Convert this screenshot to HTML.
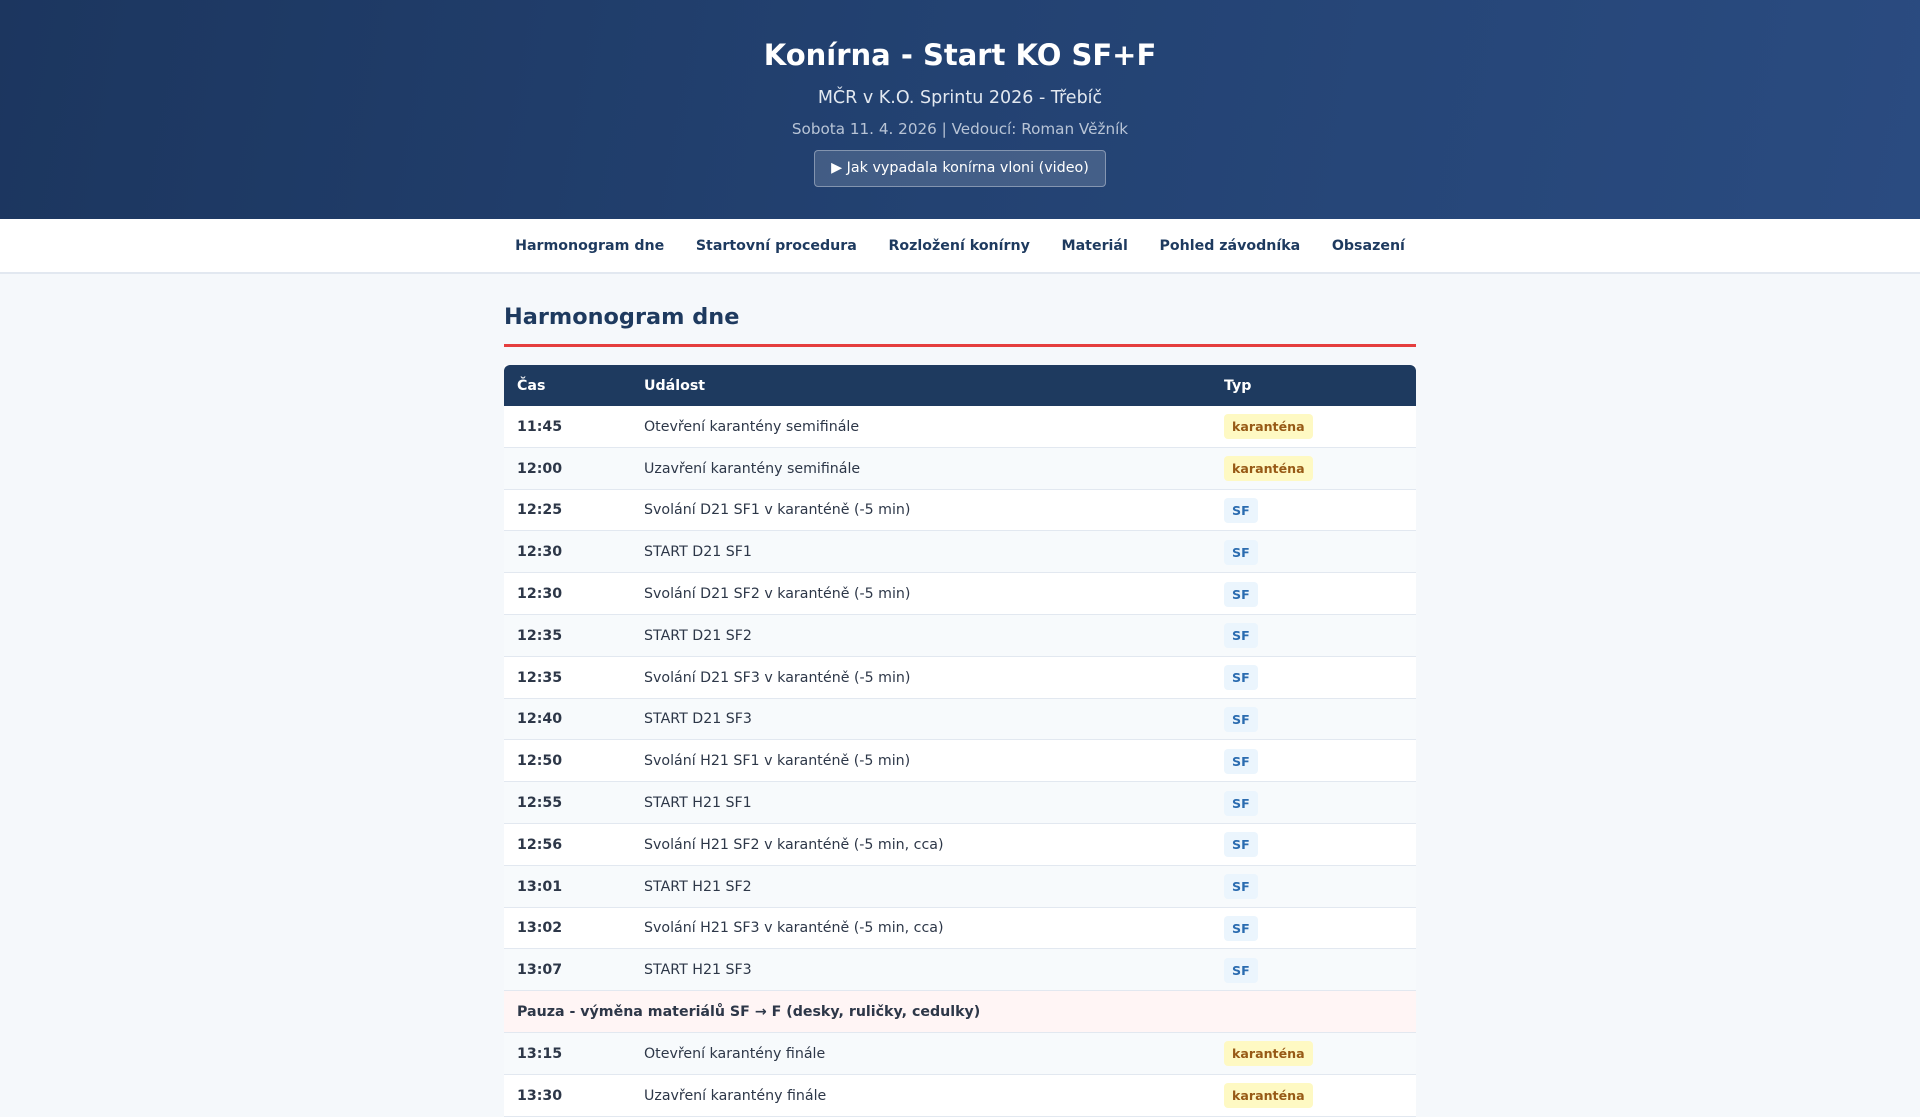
<!DOCTYPE html>
<html><head><meta charset="utf-8">
<style>
*{box-sizing:border-box;margin:0;padding:0}
body{width:1920px;height:1080px;overflow:hidden;background:#f5f8fb;font-family:"DejaVu Sans","Liberation Sans",sans-serif;color:#2d3748}
header{height:219px;background:linear-gradient(100deg,#1c365f 0%,#234272 50%,#2a4b80 100%);text-align:center;color:#fff;padding-top:36px}
h1{font-size:29px;font-weight:bold;line-height:38px}
.sub{font-size:17.5px;color:#e2e8f0;margin-top:13px;line-height:22px}
.date{font-size:15.2px;color:#b8c4d6;margin-top:10px;line-height:20px}
.btn{display:inline-block;margin-top:11px;height:37px;padding:0 16px;line-height:35px;border:1px solid rgba(255,255,255,.35);background:rgba(255,255,255,.15);border-radius:4px;font-size:14.3px;color:#fff}
nav{height:55px;background:#fff;border-bottom:2px solid #e2e8f0;display:flex;justify-content:center;align-items:center;gap:0}
nav a{font-size:14.2px;font-weight:bold;color:#1e3a5f;padding:0 15.8px;line-height:20px}
.wrap{width:912px;margin:0 auto}
h2{font-size:22.4px;color:#1e3a5f;margin-top:26px;line-height:34px;padding-bottom:10px;border-bottom:3px solid #e53e3e}
table{width:100%;border-collapse:separate;border-spacing:0;margin-top:18px;font-size:14.2px;background:#fff}
th{background:#1e3a5f;color:#fff;text-align:left;height:41px;padding:0 13px;font-size:14.2px}
th:first-child{border-top-left-radius:6px}th:last-child{border-top-right-radius:6px}
td{height:41.8px;padding:1px 13px 0;border-bottom:1px solid #e2e8f0}
tr:nth-child(odd) td{background:#f7fafc}
td:first-child{font-weight:bold;width:127px}
td:nth-child(2){width:580px}
.k,.s{display:inline-block;font-size:12.6px;font-weight:bold;padding:0 8px;height:25px;line-height:25px;border-radius:4px;vertical-align:middle}
.k{background:#fef9c3;color:#975a16}
.s{background:#ebf5fd;color:#2b6cb0}
tr.p td{background:#fff5f5!important;font-weight:bold}
</style></head><body>
<header>
<h1>Konírna - Start KO SF+F</h1>
<div class="sub">MČR v K.O. Sprintu 2026 - Třebíč</div>
<div class="date">Sobota 11. 4. 2026 | Vedoucí: Roman Věžník</div>
<div class="btn">▶ Jak vypadala konírna vloni (video)</div>
</header>
<nav><a>Harmonogram dne</a><a>Startovní procedura</a><a>Rozložení konírny</a><a>Materiál</a><a>Pohled závodníka</a><a>Obsazení</a></nav>
<div class="wrap">
<h2>Harmonogram dne</h2>
<table>
<tr><th>Čas</th><th>Událost</th><th>Typ</th></tr>
<tr><td>11:45</td><td>Otevření karantény semifinále</td><td><span class="k">karanténa</span></td></tr>
<tr><td>12:00</td><td>Uzavření karantény semifinále</td><td><span class="k">karanténa</span></td></tr>
<tr><td>12:25</td><td>Svolání D21 SF1 v karanténě (-5 min)</td><td><span class="s">SF</span></td></tr>
<tr><td>12:30</td><td>START D21 SF1</td><td><span class="s">SF</span></td></tr>
<tr><td>12:30</td><td>Svolání D21 SF2 v karanténě (-5 min)</td><td><span class="s">SF</span></td></tr>
<tr><td>12:35</td><td>START D21 SF2</td><td><span class="s">SF</span></td></tr>
<tr><td>12:35</td><td>Svolání D21 SF3 v karanténě (-5 min)</td><td><span class="s">SF</span></td></tr>
<tr><td>12:40</td><td>START D21 SF3</td><td><span class="s">SF</span></td></tr>
<tr><td>12:50</td><td>Svolání H21 SF1 v karanténě (-5 min)</td><td><span class="s">SF</span></td></tr>
<tr><td>12:55</td><td>START H21 SF1</td><td><span class="s">SF</span></td></tr>
<tr><td>12:56</td><td>Svolání H21 SF2 v karanténě (-5 min, cca)</td><td><span class="s">SF</span></td></tr>
<tr><td>13:01</td><td>START H21 SF2</td><td><span class="s">SF</span></td></tr>
<tr><td>13:02</td><td>Svolání H21 SF3 v karanténě (-5 min, cca)</td><td><span class="s">SF</span></td></tr>
<tr><td>13:07</td><td>START H21 SF3</td><td><span class="s">SF</span></td></tr>
<tr class="p"><td colspan="3">Pauza - výměna materiálů SF → F (desky, ruličky, cedulky)</td></tr>
<tr><td>13:15</td><td>Otevření karantény finále</td><td><span class="k">karanténa</span></td></tr>
<tr><td>13:30</td><td>Uzavření karantény finále</td><td><span class="k">karanténa</span></td></tr>
</table>
</div>
</body></html>
